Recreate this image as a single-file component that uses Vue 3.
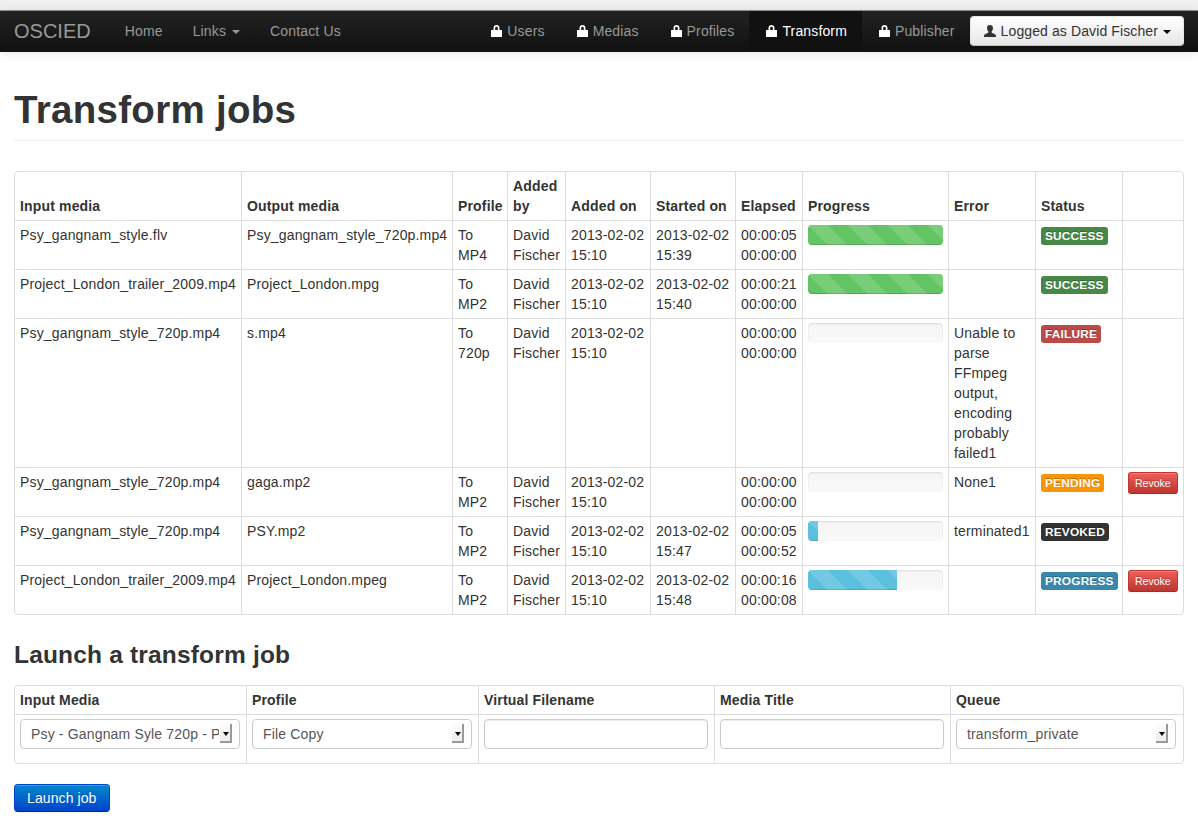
<script setup>
const mainLinks = [
  { label: 'Home' },
  { label: 'Links', caret: true },
  { label: 'Contact Us' },
]

const lockedLinks = [
  { label: 'Users' },
  { label: 'Medias' },
  { label: 'Profiles' },
  { label: 'Transform', active: true },
  { label: 'Publisher' },
]

const jobColumns = [
  'Input media', 'Output media', 'Profile', 'Added by', 'Added on', 'Started on',
  'Elapsed', 'Progress', 'Error', 'Status', '',
]

const jobs = [
  { input: 'Psy_gangnam_style.flv', output: 'Psy_gangnam_style_720p.mp4', profile: 'To MP4', added: '2013-02-02 15:10', started: '2013-02-02 15:39', elapsed: '00:00:05 00:00:00', progress: 100, bar: 'success', error: '', status: 'SUCCESS', label: 'success' },
  { input: 'Project_London_trailer_2009.mp4', output: 'Project_London.mpg', profile: 'To MP2', added: '2013-02-02 15:10', started: '2013-02-02 15:40', elapsed: '00:00:21 00:00:00', progress: 100, bar: 'success', error: '', status: 'SUCCESS', label: 'success' },
  { input: 'Psy_gangnam_style_720p.mp4', output: 's.mp4', profile: 'To 720p', added: '2013-02-02 15:10', started: '', elapsed: '00:00:00 00:00:00', progress: 0, bar: 'info', error: 'Unable to parse FFmpeg output, encoding probably failed1', status: 'FAILURE', label: 'danger' },
  { input: 'Psy_gangnam_style_720p.mp4', output: 'gaga.mp2', profile: 'To MP2', added: '2013-02-02 15:10', started: '', elapsed: '00:00:00 00:00:00', progress: 0, bar: 'info', error: 'None1', status: 'PENDING', label: 'warning', revoke: true },
  { input: 'Psy_gangnam_style_720p.mp4', output: 'PSY.mp2', profile: 'To MP2', added: '2013-02-02 15:10', started: '2013-02-02 15:47', elapsed: '00:00:05 00:00:52', progress: 7.4, bar: 'info', error: 'terminated1', status: 'REVOKED', label: 'inverse' },
  { input: 'Project_London_trailer_2009.mp4', output: 'Project_London.mpeg', profile: 'To MP2', added: '2013-02-02 15:10', started: '2013-02-02 15:48', elapsed: '00:00:16 00:00:08', progress: 66, bar: 'info', error: '', status: 'PROGRESS', label: 'info', revoke: true },
]

const formColumns = ['Input Media', 'Profile', 'Virtual Filename', 'Media Title', 'Queue']
</script>

<template>
  <div class="page">
    <div class="top-strip"></div>
    <nav class="navbar">
      <a class="brand">OSCIED</a>
      <ul class="nav nav-left">
        <li v-for="link in mainLinks" :key="link.label">
          <a>{{ link.label }}<span v-if="link.caret" class="caret"></span></a>
        </li>
      </ul>
      <ul class="nav nav-right">
        <li v-for="link in lockedLinks" :key="link.label" :class="{ active: link.active }">
          <a>
            <svg class="icon" viewBox="0 0 14 14" fill="#fff">
              <path fill-rule="evenodd" d="M2 6h2.500V4C4.500 2 5.700 1 7.500 1s3 1 3 3v2H13v7H2zM6.200 6h2.600V4.200C8.800 3.200 8.300 2.700 7.500 2.700s-1.300.5-1.300 1.500z" />
            </svg>{{ link.label }}
          </a>
        </li>
      </ul>
      <button class="user-btn">
        <svg class="icon" viewBox="0 0 14 14" fill="#333">
          <path d="M7 1c1.800 0 3 1.200 3 3 0 1.300-.5 2.600-1.300 3.300v1.400c.9.6 4.300 1.300 4.300 3.300v1H1v-1c0-2 3.400-2.700 4.300-3.300V7.300C4.500 6.600 4 5.300 4 4c0-1.800 1.200-3 3-3z" />
        </svg>Logged as David Fischer<span class="caret caret-dark"></span>
      </button>
    </nav>

    <main class="content">
      <div class="page-header">
        <h1>Transform jobs</h1>
      </div>

      <table class="grid jobs">
        <colgroup>
          <col class="c-input" /><col class="c-output" /><col class="c-profile" /><col class="c-by" />
          <col class="c-date" /><col class="c-date" /><col class="c-elapsed" /><col class="c-progress" />
          <col class="c-error" /><col class="c-error" /><col class="c-action" />
        </colgroup>
        <thead>
          <tr>
            <th v-for="col in jobColumns" :key="col">{{ col }}</th>
          </tr>
        </thead>
        <tbody>
          <tr v-for="job in jobs" :key="job.input + job.output">
            <td>{{ job.input }}</td>
            <td>{{ job.output }}</td>
            <td>{{ job.profile }}</td>
            <td class="tight">David Fischer</td>
            <td class="tight">{{ job.added }}</td>
            <td class="tight">{{ job.started }}</td>
            <td class="tight">{{ job.elapsed }}</td>
            <td>
              <div class="progress">
                <div :class="['bar', 'bar-' + job.bar]" :style="{ width: job.progress + '%' }"></div>
              </div>
            </td>
            <td>{{ job.error }}</td>
            <td><span :class="['label', 'label-' + job.label]">{{ job.status }}</span></td>
            <td><button v-if="job.revoke" class="revoke">Revoke</button></td>
          </tr>
        </tbody>
      </table>

      <h3>Launch a transform job</h3>

      <form @submit.prevent>
        <table class="grid launch">
          <colgroup>
            <col class="f-a" /><col class="f-b" /><col class="f-c" /><col class="f-c" /><col class="f-d" />
          </colgroup>
          <thead>
            <tr>
              <th v-for="col in formColumns" :key="col">{{ col }}</th>
            </tr>
          </thead>
          <tbody>
            <tr>
              <td>
                <div class="select-wrap">
                  <select><option>Psy - Gangnam Syle 720p - Psy_gangnam_style_720p.mp4</option></select>
                  <span class="arrow"></span>
                </div>
              </td>
              <td>
                <div class="select-wrap">
                  <select><option>File Copy</option></select>
                  <span class="arrow"></span>
                </div>
              </td>
              <td><input type="text" /></td>
              <td><input type="text" /></td>
              <td>
                <div class="select-wrap">
                  <select><option>transform_private</option></select>
                  <span class="arrow"></span>
                </div>
              </td>
            </tr>
          </tbody>
        </table>
        <button class="launch-btn" type="submit">Launch job</button>
      </form>
    </main>
  </div>
</template>

<style>
body {
  background: #fff;
}
</style>

<style scoped>
.page {
  font-family: "Liberation Sans", Arial, sans-serif;
  font-size: 14px;
  line-height: 20px;
  color: #333;
  min-height: 822px;
}

.top-strip {
  height: 10px;
  background: #f1f0ee;
}

.navbar {
  display: flex;
  align-items: stretch;
  height: 42px;
  box-sizing: border-box;
  padding: 0 14px;
  border-top: 1px solid #8c8c8c;
  background: linear-gradient(to bottom, #222, #111);
  box-shadow: 0 1px 10px rgba(0, 0, 0, 0.1);
}

.brand {
  color: #999;
  font-size: 20px;
  line-height: 41px;
  margin-right: 19px;
}

.nav {
  display: flex;
  list-style: none;
  margin: 0;
  padding: 0;
}

.nav-left {
  letter-spacing: 0.15px;
}

.nav-right {
  margin-left: auto;
  letter-spacing: 0.14px;
}

.nav a {
  display: block;
  padding: 0 15px;
  line-height: 41px;
  color: #999;
}

.nav .active a {
  color: #fff;
  background: #111;
}

.icon {
  display: inline-block;
  width: 14px;
  height: 14px;
  margin-right: 4px;
  vertical-align: -2px;
}

.caret {
  display: inline-block;
  width: 0;
  height: 0;
  margin-left: 6px;
  vertical-align: 2px;
  border-top: 4px solid #999;
  border-left: 4px solid transparent;
  border-right: 4px solid transparent;
}

.caret-dark {
  margin-left: 5px;
  border-top-color: #000;
}

.user-btn {
  align-self: flex-start;
  margin-top: 5px;
  height: 30px;
  padding: 0 12px;
  font: inherit;
  letter-spacing: 0.11px;
  color: #333;
  white-space: nowrap;
  background: linear-gradient(to bottom, #fff, #e6e6e6);
  border: 1px solid #bbb;
  border-color: #e6e6e6 #e6e6e6 #bfbfbf;
  border-radius: 4px;
  box-shadow: inset 0 1px 0 rgba(255, 255, 255, 0.2), 0 1px 2px rgba(0, 0, 0, 0.05);
}

.content {
  padding: 0 14px;
}

.page-header {
  margin: 38px 0 30px;
  padding-bottom: 10px;
  border-bottom: 1px solid #eee;
}

h1 {
  margin: 0;
  font-size: 38.5px;
  line-height: 40px;
  font-weight: bold;
  letter-spacing: 0.3px;
}

h3 {
  margin: 0 0 10px;
  font-size: 24.5px;
  line-height: 40px;
  font-weight: bold;
  letter-spacing: 0.18px;
}

.grid {
  width: 1170px;
  table-layout: fixed;
  border-collapse: separate;
  border-spacing: 0;
  border: 1px solid #ddd;
  border-radius: 4px;
  margin-bottom: 20px;
  letter-spacing: 0.16px;
}

.grid th,
.grid td {
  padding: 4px 5px;
  text-align: left;
  border-left: 1px solid #ddd;
  border-top: 1px solid #ddd;
}

.grid th {
  font-weight: bold;
  vertical-align: bottom;
  border-top: 0;
}

.grid td {
  vertical-align: top;
}

.grid td.tight {
  padding-right: 0;
}

.grid th:first-child,
.grid td:first-child {
  border-left: 0;
}

.c-input { width: 226px; }
.c-output { width: 211px; }
.c-profile { width: 55px; }
.c-by { width: 58px; }
.c-date { width: 85px; }
.c-elapsed { width: 67px; }
.c-progress { width: 146px; }
.c-error { width: 87px; }
.c-action { width: 61px; }

.f-a { width: 231px; }
.f-b { width: 232px; }
.f-c { width: 236px; }
.f-d { width: 233px; }

.progress {
  height: 20px;
  margin-bottom: 20px;
  overflow: hidden;
  border-radius: 4px;
  background: linear-gradient(to bottom, #f5f5f5, #f9f9f9);
  box-shadow: inset 0 1px 2px rgba(0, 0, 0, 0.1);
}

.bar {
  height: 100%;
  box-shadow: inset 0 -1px 0 rgba(0, 0, 0, 0.15);
  background-size: 40px 40px;
}

.bar-success {
  background-color: #62c462;
  background-image: linear-gradient(45deg, rgba(255, 255, 255, 0.15) 25%, transparent 25%, transparent 50%, rgba(255, 255, 255, 0.15) 50%, rgba(255, 255, 255, 0.15) 75%, transparent 75%, transparent);
}

.bar-info {
  background-color: #5bc0de;
  background-image: linear-gradient(45deg, rgba(255, 255, 255, 0.15) 25%, transparent 25%, transparent 50%, rgba(255, 255, 255, 0.15) 50%, rgba(255, 255, 255, 0.15) 75%, transparent 75%, transparent);
}

.label {
  display: inline-block;
  padding: 2px 4px;
  font-size: 11.844px;
  font-weight: bold;
  line-height: 14px;
  letter-spacing: 0.2px;
  color: #fff;
  text-shadow: 0 -1px 0 rgba(0, 0, 0, 0.25);
  border-radius: 3px;
  vertical-align: baseline;
}

.label-success { background: #468847; }
.label-danger { background: #b94a48; }
.label-warning { background: #f89406; }
.label-inverse { background: #333; }
.label-info { background: #3a87ad; }

.revoke {
  display: block;
  height: 22px;
  padding: 0 6px;
  font: inherit;
  font-size: 10.5px;
  color: #fff;
  text-shadow: 0 -1px 0 rgba(0, 0, 0, 0.25);
  background: linear-gradient(to bottom, #ee5f5b, #bd362f);
  border: 1px solid #bd362f;
  border-bottom-color: #a52c27;
  border-radius: 3px;
  box-shadow: inset 0 1px 0 rgba(255, 255, 255, 0.2), 0 1px 2px rgba(0, 0, 0, 0.05);
}

.select-wrap {
  position: relative;
  width: 220px;
  margin-bottom: 10px;
}

select {
  display: block;
  appearance: none;
  width: 220px;
  height: 30px;
  box-sizing: border-box;
  padding: 0 20px 0 10px;
  font: inherit;
  letter-spacing: inherit;
  color: #555;
  background: #fff;
  border: 1px solid #ccc;
  border-radius: 4px;
}

.arrow {
  position: absolute;
  top: 5px;
  right: 8px;
  width: 12px;
  height: 19px;
  box-sizing: border-box;
  background: linear-gradient(to bottom, #fdfdfd, #ececec);
  border-right: 2px solid #999;
  border-bottom: 2px solid #999;
  pointer-events: none;
}

.arrow::after {
  content: "";
  position: absolute;
  left: 3px;
  top: 8px;
  border-top: 4px solid #000;
  border-left: 3px solid transparent;
  border-right: 3px solid transparent;
}

input {
  display: block;
  width: 224px;
  height: 30px;
  box-sizing: border-box;
  margin-bottom: 10px;
  padding: 4px 6px;
  font: inherit;
  color: #555;
  background: #fff;
  border: 1px solid #ccc;
  border-radius: 4px;
  box-shadow: inset 0 1px 1px rgba(0, 0, 0, 0.075);
}

.launch-btn {
  display: block;
  height: 28px;
  padding: 0 12px;
  font: inherit;
  letter-spacing: 0.1px;
  color: #fff;
  text-shadow: 0 -1px 0 rgba(0, 0, 0, 0.25);
  background: linear-gradient(to bottom, #08c, #04c);
  border: 1px solid #04c;
  border-bottom-color: #002a80;
  border-radius: 4px;
  box-shadow: inset 0 1px 0 rgba(255, 255, 255, 0.2), 0 1px 2px rgba(0, 0, 0, 0.05);
}
</style>
